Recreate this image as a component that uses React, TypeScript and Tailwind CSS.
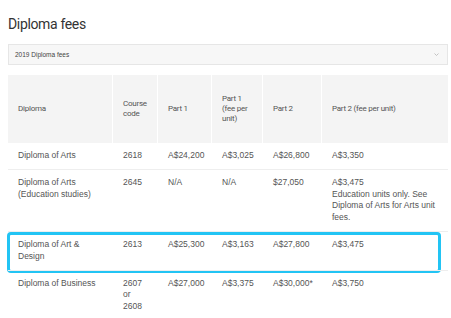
import { Fragment } from 'react';

type Row = {
  diploma: string[];
  code: string[];
  part1: string;
  part1Unit: string;
  part2: string;
  part2Unit: string[];
  highlight?: boolean;
};

const headers: string[][] = [
  ['Diploma'],
  ['Course', 'code'],
  ['Part 1'],
  ['Part 1', '(fee per', 'unit)'],
  ['Part 2'],
  ['Part 2 (fee per unit)'],
];

const rows: Row[] = [
  {
    diploma: ['Diploma of Arts'],
    code: ['2618'],
    part1: 'A$24,200',
    part1Unit: 'A$3,025',
    part2: 'A$26,800',
    part2Unit: ['A$3,350'],
  },
  {
    diploma: ['Diploma of Arts', '(Education studies)'],
    code: ['2645'],
    part1: 'N/A',
    part1Unit: 'N/A',
    part2: '$27,050',
    part2Unit: ['A$3,475', 'Education units only. See', 'Diploma of Arts for Arts unit', 'fees.'],
  },
  {
    diploma: ['Diploma of Art &', 'Design'],
    code: ['2613'],
    part1: 'A$25,300',
    part1Unit: 'A$3,163',
    part2: 'A$27,800',
    part2Unit: ['A$3,475'],
    highlight: true,
  },
  {
    diploma: ['Diploma of Business'],
    code: ['2607', 'or', '2608'],
    part1: 'A$27,000',
    part1Unit: 'A$3,375',
    part2: 'A$30,000*',
    part2Unit: ['A$3,750'],
  },
];

const cols = 'grid grid-cols-[105px_45px_54px_51px_59px_1fr]';

function Lines({ lines }: { lines: string[] }) {
  return (
    <>
      {lines.map((l, i) => (
        <Fragment key={i}>
          {i > 0 && <br />}
          <span className="whitespace-nowrap">{l}</span>
        </Fragment>
      ))}
    </>
  );
}

export default function App() {
  return (
    <div className="w-[451px] h-[318px] overflow-hidden bg-white">
      <div className="ml-[8px] w-[440px] pt-[14px]">
        <h2 className="font-['Roboto',sans-serif] text-[14px] leading-[20px] tracking-[-0.35px] text-[#333]">
          Diploma fees
        </h2>

        <div className="mt-[10px] h-[21px] flex items-center justify-between border border-[#e6e6e6] bg-[#f7f7f7] pl-[6px] pr-[8px]">
          <span className="font-['Liberation_Sans',Arial,sans-serif] text-[6.5px] text-[#444]">2019 Diploma fees</span>
          <svg width="5" height="3" viewBox="0 0 5 3" className="text-[#b5b5b5]">
            <path d="M0.5 0.5 L2.5 2.5 L4.5 0.5" fill="none" stroke="currentColor" strokeWidth="0.8" />
          </svg>
        </div>

        <div className="mt-[10px]">
          <div className={`${cols} h-[68px] bg-[#f4f4f4] font-['Roboto',sans-serif] text-[8px] leading-[10px] tracking-[-0.25px] text-[#555]`}>
            {headers.map((h, i) => (
              <div
                key={i}
                className={`flex items-center px-[10px] ${i < headers.length - 1 ? 'border-r border-white' : ''}`}
              >
                <div>
                  <Lines lines={h} />
                </div>
              </div>
            ))}
          </div>

          <div className="font-['Liberation_Sans',Arial,sans-serif] text-[8.5px] leading-[11.8px] text-[#555]">
            {rows.map((r, i) => (
              <div key={i} className={`${cols} relative ${i > 0 ? 'border-t border-[#eeeeee]' : ''}`}>
                <div className="px-[10px] py-[7px]">
                  <Lines lines={r.diploma} />
                </div>
                <div className="px-[10px] py-[7px]">
                  <Lines lines={r.code} />
                </div>
                <div className="px-[10px] py-[7px] whitespace-nowrap">{r.part1}</div>
                <div className="px-[10px] py-[7px] whitespace-nowrap">{r.part1Unit}</div>
                <div className="px-[10px] py-[7px] whitespace-nowrap">{r.part2}</div>
                <div className="px-[10px] py-[7px]">
                  <Lines lines={r.part2Unit} />
                </div>
                {r.highlight && (
                  <div className="pointer-events-none absolute top-0 left-[-1px] right-[7px] h-[41px] rounded-[4px] border-[3px] border-[#22c4f4]" />
                )}
              </div>
            ))}
          </div>
        </div>
      </div>
    </div>
  );
}
